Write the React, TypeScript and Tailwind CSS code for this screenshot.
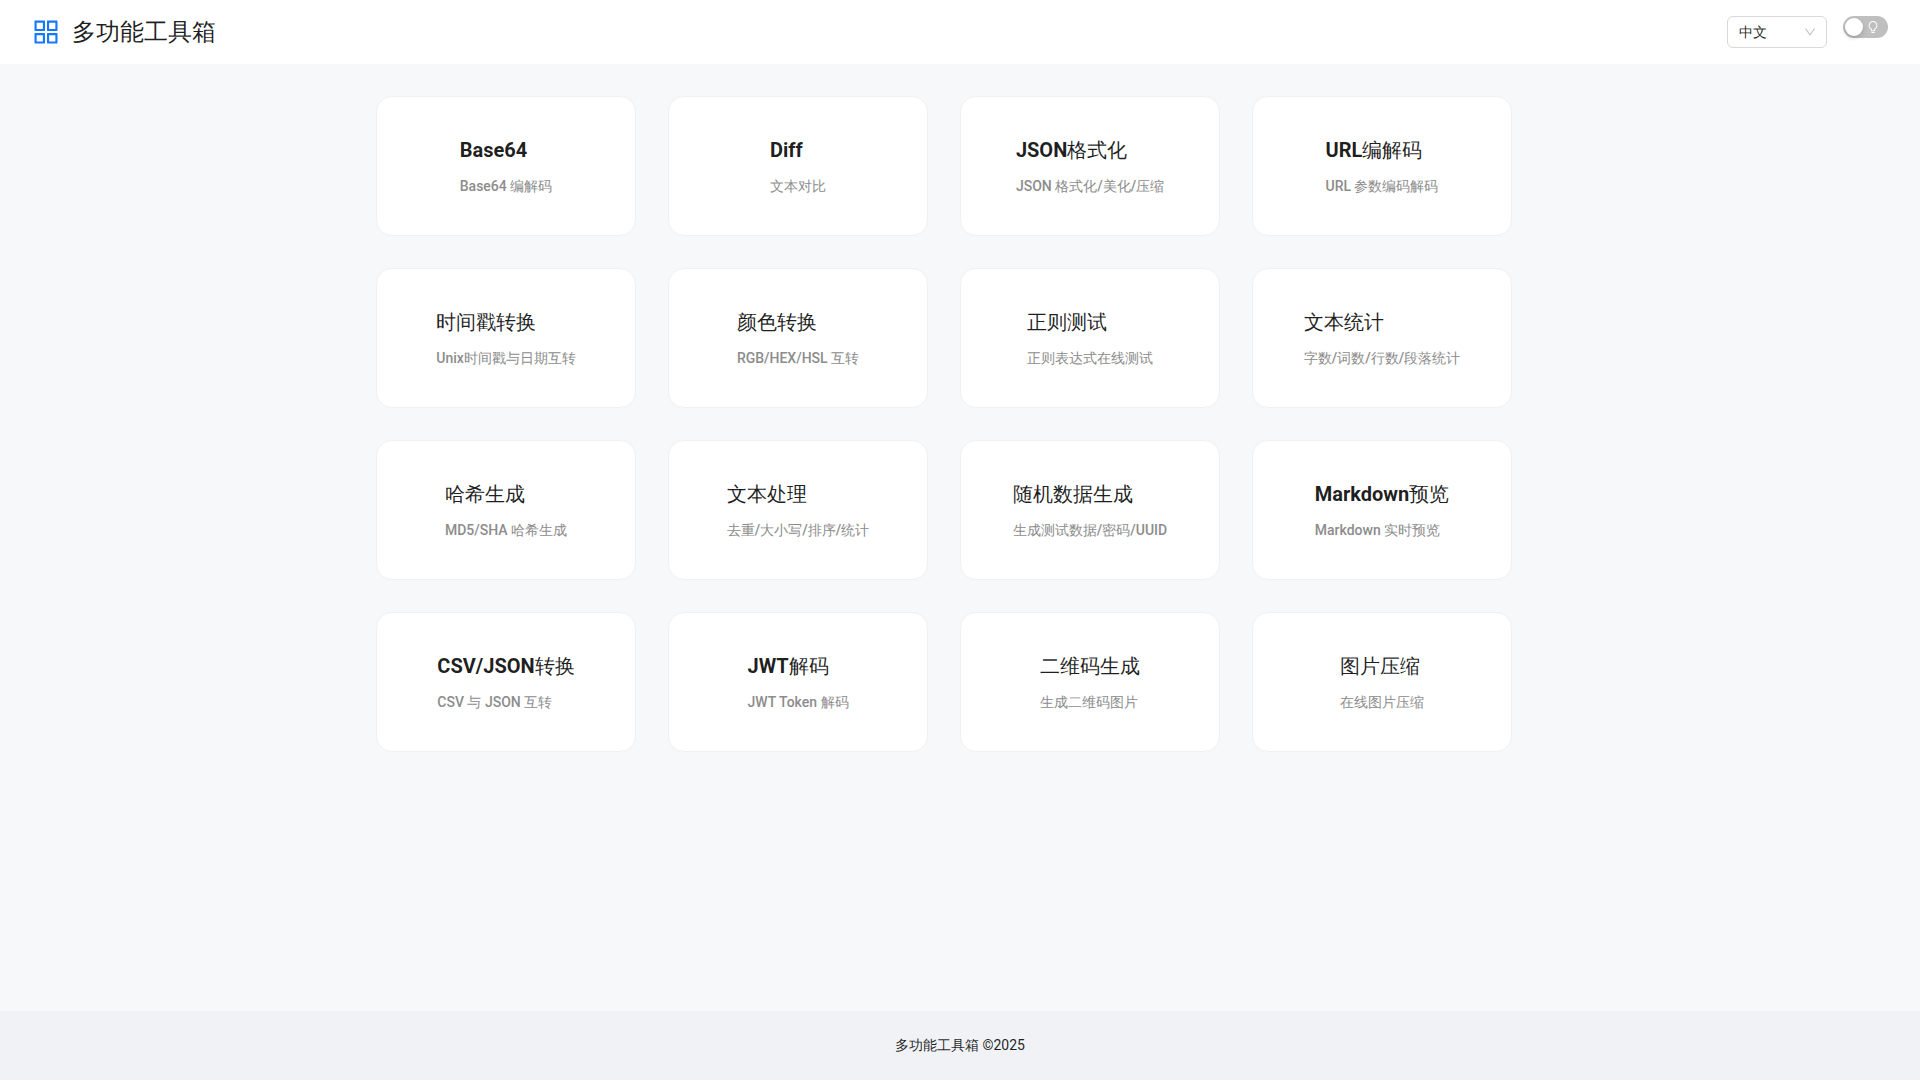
import { useState } from "react";

type Tool = { title: string; desc: string };

const tools: Tool[] = [
  { title: "Base64", desc: "Base64 编解码" },
  { title: "Diff", desc: "文本对比" },
  { title: "JSON格式化", desc: "JSON 格式化/美化/压缩" },
  { title: "URL编解码", desc: "URL 参数编码解码" },
  { title: "时间戳转换", desc: "Unix时间戳与日期互转" },
  { title: "颜色转换", desc: "RGB/HEX/HSL 互转" },
  { title: "正则测试", desc: "正则表达式在线测试" },
  { title: "文本统计", desc: "字数/词数/行数/段落统计" },
  { title: "哈希生成", desc: "MD5/SHA 哈希生成" },
  { title: "文本处理", desc: "去重/大小写/排序/统计" },
  { title: "随机数据生成", desc: "生成测试数据/密码/UUID" },
  { title: "Markdown预览", desc: "Markdown 实时预览" },
  { title: "CSV/JSON转换", desc: "CSV 与 JSON 互转" },
  { title: "JWT解码", desc: "JWT Token 解码" },
  { title: "二维码生成", desc: "生成二维码图片" },
  { title: "图片压缩", desc: "在线图片压缩" },
];

function AppstoreIcon() {
  return (
    <svg viewBox="64 64 896 896" className="size-7 text-[#1677ff]" fill="currentColor" aria-hidden="true">
      <path d="M464 144H160c-8.8 0-16 7.2-16 16v304c0 8.8 7.2 16 16 16h304c8.8 0 16-7.2 16-16V160c0-8.8-7.2-16-16-16zm-52 268H212V212h200v200zm452-268H560c-8.8 0-16 7.2-16 16v304c0 8.8 7.2 16 16 16h304c8.8 0 16-7.2 16-16V160c0-8.8-7.2-16-16-16zm-52 268H612V212h200v200zM464 544H160c-8.8 0-16 7.2-16 16v304c0 8.8 7.2 16 16 16h304c8.8 0 16-7.2 16-16V560c0-8.8-7.2-16-16-16zm-52 268H212V612h200v200zm452-268H560c-8.8 0-16 7.2-16 16v304c0 8.8 7.2 16 16 16h304c8.8 0 16-7.2 16-16V560c0-8.8-7.2-16-16-16zm-52 268H612V612h200v200z" />
    </svg>
  );
}

function DownIcon() {
  return (
    <svg
      viewBox="64 64 896 896"
      className="pointer-events-none absolute right-[11px] top-[10px] size-3 text-black/25"
      fill="currentColor"
      aria-hidden="true"
    >
      <path d="M884 256h-75c-5.1 0-9.9 2.5-12.9 6.6L512 654.2 227.9 262.6c-3-4.1-7.8-6.6-12.9-6.6h-75c-6.5 0-10.3 7.4-6.5 12.7l352.6 486.1c12.8 17.6 39 17.6 51.7 0l352.6-486.1c3.9-5.3.1-12.7-6.4-12.7z" />
    </svg>
  );
}

function BulbIcon() {
  return (
    <svg viewBox="64 64 896 896" className="size-3" fill="currentColor" aria-hidden="true">
      <path d="M632 888H392c-4.4 0-8 3.6-8 8v32c0 17.7 14.3 32 32 32h192c17.7 0 32-14.3 32-32v-32c0-4.4-3.6-8-8-8zM512 64c-181.1 0-328 146.9-328 328 0 121.4 66 227.4 164 284.1V792c0 17.7 14.3 32 32 32h264c17.7 0 32-14.3 32-32V676.1c98-56.7 164-162.7 164-284.1 0-181.1-146.9-328-328-328zm127.9 549.8L604 634.6V752H420V634.6l-35.9-20.8C305.4 568.3 256 484.5 256 392c0-141.4 114.6-256 256-256s256 114.6 256 256c0 92.5-49.4 176.3-128.1 221.8z" />
    </svg>
  );
}

function ThemeSwitch() {
  const [on, setOn] = useState(false);
  return (
    <label className="relative flex h-[22px] w-[45px] cursor-pointer items-center rounded-full bg-black/25 has-checked:bg-[#1677ff]">
      <input
        type="checkbox"
        role="switch"
        aria-label="深色模式"
        checked={on}
        onChange={(e) => setOn(e.target.checked)}
        className="peer absolute inset-0 size-full cursor-pointer appearance-none rounded-full"
      />
      <span className="pointer-events-none absolute left-0.5 size-[18px] rounded-full bg-white shadow-[0_2px_4px_rgba(0,35,11,0.2)] peer-checked:left-6" />
      <span className="pointer-events-none ml-6 text-white peer-checked:ml-2">
        <BulbIcon />
      </span>
    </label>
  );
}

function ToolCard({ title, desc }: Tool) {
  return (
    <button
      type="button"
      className="flex h-[140px] w-[260px] cursor-pointer items-center justify-center rounded-2xl border border-[#f0f0f0] bg-white text-left"
    >
      <span className="flex flex-col gap-2">
        <span className="text-xl leading-8 font-bold">{title}</span>
        <span className="text-sm leading-6 font-medium text-[#8c8c8c]">{desc}</span>
      </span>
    </button>
  );
}

export default function App() {
  return (
    <div className="flex min-h-screen flex-col bg-[#f7f8fa] font-[Roboto,'Noto_Sans',sans-serif] text-sm text-black/88 [font-synthesis:none]">
      <header className="flex h-16 items-center justify-between bg-white px-8">
        <div className="flex items-center gap-3">
          <AppstoreIcon />
          <h1 className="text-2xl leading-8 font-bold">多功能工具箱</h1>
        </div>
        <div className="flex items-start gap-4">
          <div className="relative">
            <select
              aria-label="语言"
              className="h-8 w-[100px] appearance-none rounded-md border border-[#d9d9d9] bg-white px-[11px] text-sm"
            >
              <option>中文</option>
              <option>English</option>
            </select>
            <DownIcon />
          </div>
          <ThemeSwitch />
        </div>
      </header>
      <main className="mx-auto flex w-full max-w-[1200px] flex-1 flex-wrap content-start gap-8 px-4 py-8">
        {tools.map((tool) => (
          <ToolCard key={tool.title} title={tool.title} desc={tool.desc} />
        ))}
      </main>
      <footer className="bg-[#f0f2f5] py-6 text-center leading-[21px]">多功能工具箱 ©2025</footer>
    </div>
  );
}
